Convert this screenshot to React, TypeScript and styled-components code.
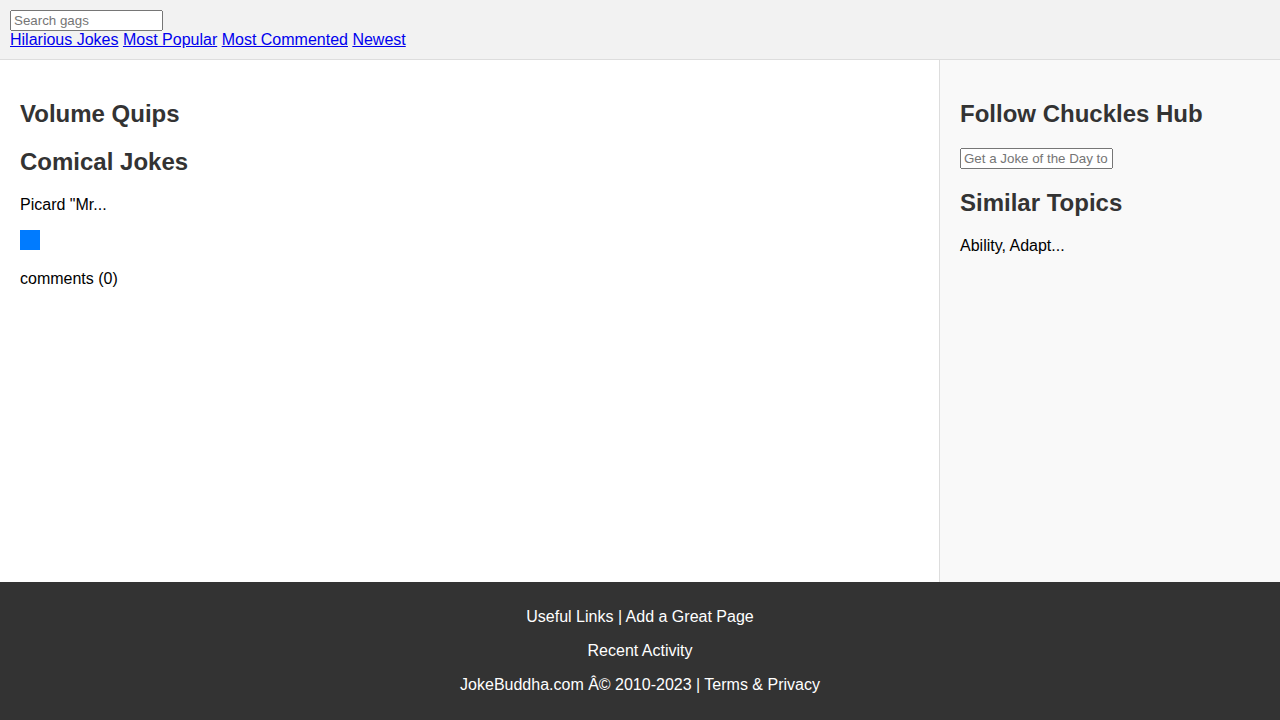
import React from "react";
import styled, { createGlobalStyle } from "styled-components";

const GlobalStyle = createGlobalStyle`
  html, body {
    margin: 0;
    padding: 0;
  }
  body {
    font-family: "Liberation Sans", Arial, sans-serif;
    font-size: 16px;
    color: #000;
    background: #fff;
  }
`;

const Page = styled.div`
  display: flex;
  flex-direction: column;
  min-height: 100vh;
`;

const Header = styled.header`
  background: #f2f2f2;
  padding: 10px;
  border-bottom: 1px solid #ddd;
`;

const SearchForm = styled.form`
  margin: 0;
`;

const TextInput = styled.input`
  box-sizing: border-box;
  width: 153px;
  font-family: "Liberation Sans", Arial, sans-serif;
  font-size: 13.333px;
`;

const Nav = styled.nav`
  a {
    color: #0000ee;
    text-decoration: underline;
  }
`;

const Body = styled.div`
  flex: 1;
  display: flex;
`;

const Main = styled.main`
  flex: 1;
  padding: 20px;
`;

const Sidebar = styled.aside`
  width: 300px;
  padding: 20px;
  background: #f9f9f9;
  border-left: 1px solid #ddd;
`;

const Title = styled.h2`
  font-size: 24px;
  font-weight: bold;
  color: #333;
  margin: 0.83em 0;
`;

const Text = styled.p`
  margin: 16px 0;
`;

const Swatch = styled.span`
  display: inline-block;
  width: 20px;
  height: 20px;
  background: #007bff;
`;

const Footer = styled.footer`
  background: #333;
  color: #fff;
  text-align: center;
  padding: 10px;
`;

export default function App() {
  return (
    <>
      <GlobalStyle />
      <Page>
        <Header>
          <SearchForm onSubmit={(e) => e.preventDefault()}>
            <TextInput type="text" placeholder="Search gags" />
          </SearchForm>
          <Nav>
            <a href="#">Hilarious Jokes</a> <a href="#">Most Popular</a>{" "}
            <a href="#">Most Commented</a> <a href="#">Newest</a>
          </Nav>
        </Header>
        <Body>
          <Main>
            <Title>Volume Quips</Title>
            <Title>Comical Jokes</Title>
            <Text>Picard "Mr...</Text>
            <Text>
              <Swatch />
            </Text>
            <Text>comments (0)</Text>
          </Main>
          <Sidebar>
            <Title>Follow Chuckles Hub</Title>
            <TextInput type="text" placeholder="Get a Joke of the Day to" />
            <Title>Similar Topics</Title>
            <Text>Ability, Adapt...</Text>
          </Sidebar>
        </Body>
        <Footer>
          <Text>Useful Links | Add a Great Page</Text>
          <Text>Recent Activity</Text>
          <Text>JokeBuddha.com Â© 2010-2023 | Terms &amp; Privacy</Text>
        </Footer>
      </Page>
    </>
  );
}
